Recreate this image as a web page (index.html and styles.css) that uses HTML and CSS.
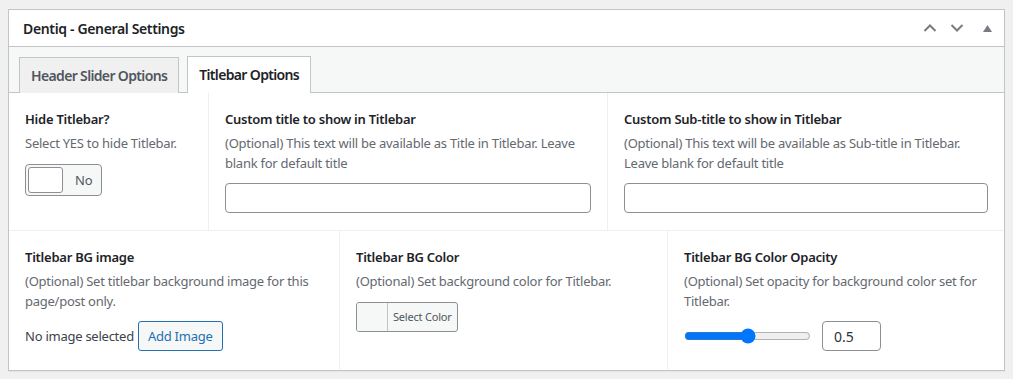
FILE: index.html
```html
<html>
  <head>
    <title>Dentiq - General Settings</title>
    <link rel="stylesheet" href="styles.css">
  </head>
  <body>
    <section class="postbox">
      <header class="postbox-header">
        <h2>Dentiq - General Settings</h2>
        <div class="handle-actions">
          <span class="handle-btn">
            <svg width="14" height="10" viewBox="0 0 14 10"><path d="M1.5 8 L7 2.5 L12.5 8" fill="none" stroke="#787c82" stroke-width="2"/></svg>
          </span>
          <span class="handle-btn">
            <svg width="14" height="10" viewBox="0 0 14 10"><path d="M1.5 2 L7 7.5 L12.5 2" fill="none" stroke="#787c82" stroke-width="2"/></svg>
          </span>
          <span class="handle-btn toggle-indicator">
            <svg width="9" height="7" viewBox="0 0 9 7"><path d="M0 7 L4.5 0 L9 7 Z" fill="#787c82"/></svg>
          </span>
        </div>
      </header>

      <nav class="tabs">
        <span class="tab">Header Slider Options</span>
        <span class="tab tab-active">Titlebar Options</span>
      </nav>

      <div class="fields-row row-top">
        <div class="field">
          <label class="field-label">Hide Titlebar?</label>
          <p class="field-desc">Select YES to hide Titlebar.</p>
          <div class="switch">
            <span class="switch-knob"></span>
            <span class="switch-text">No</span>
          </div>
        </div>
        <div class="field">
          <label class="field-label">Custom title to show in Titlebar</label>
          <p class="field-desc">(Optional) This text will be available as Title in Titlebar. Leave blank for default title</p>
          <input type="text" class="text-input">
        </div>
        <div class="field">
          <label class="field-label">Custom Sub-title to show in Titlebar</label>
          <p class="field-desc">(Optional) This text will be available as Sub-title in Titlebar. Leave blank for default title</p>
          <input type="text" class="text-input">
        </div>
      </div>

      <div class="fields-row row-bottom">
        <div class="field">
          <label class="field-label">Titlebar BG image</label>
          <p class="field-desc">(Optional) Set titlebar background image for this page/post only.</p>
          <div class="image-row">
            <span class="no-image">No image selected</span>
            <button class="button-secondary">Add Image</button>
          </div>
        </div>
        <div class="field">
          <label class="field-label">Titlebar BG Color</label>
          <p class="field-desc">(Optional) Set background color for Titlebar.</p>
          <button class="color-button">
            <span class="color-swatch"></span>
            <span class="color-text">Select Color</span>
          </button>
        </div>
        <div class="field">
          <label class="field-label">Titlebar BG Color Opacity</label>
          <p class="field-desc">(Optional) Set opacity for background color set for Titlebar.</p>
          <div class="range-row">
            <input type="range" class="range-input" min="0" max="1" step="0.01" value="0.5">
            <input type="text" class="number-input" value="0.5">
          </div>
        </div>
      </div>
    </section>
  </body>
</html>
```

FILE: styles.css
```css
body {
  margin: 0;
  padding: 9px 8px 8px 8px;
  background-color: #f0f0f1;
  font-family: "Noto Sans", "Open Sans", sans-serif;
  font-size: 13px;
  letter-spacing: -0.25px;
  color: #3c434a;
}

.postbox {
  background: #fff;
  border: 1px solid #c3c4c7;
  box-shadow: 0 1px 1px rgba(0, 0, 0, 0.04);
}

.postbox-header {
  display: flex;
  align-items: center;
  height: 36px;
  border-bottom: 1px solid #c3c4c7;
  padding-left: 14px;

  h2 {
    margin: 0;
    flex: auto;
    font-size: 14px;
    font-weight: 600;
    letter-spacing: -0.35px;
    color: #1d2327;
  }

  .handle-actions {
    display: flex;
    align-items: center;
    margin-right: 0;
  }

  .handle-btn {
    display: flex;
    align-items: center;
    justify-content: center;
    width: 27px;
    height: 36px;
  }

  .toggle-indicator {
    width: 34px;
  }
}

.tabs {
  display: flex;
  gap: 8px;
  align-items: flex-end;
  height: 45px;
  padding-left: 10px;
  background: #f6f7f7;
  border-bottom: 1px solid #c3c4c7;

  .tab {
    height: 35px;
    line-height: 35px;
    padding: 0 11px;
    margin-bottom: -1px;
    border: 1px solid #c3c4c7;
    border-bottom: none;
    background: #f0f0f1;
    font-size: 14px;
    font-weight: 600;
    letter-spacing: -0.65px;
    color: #50575e;
  }

  .tab-active {
    height: 36px;
    background: #fff;
    color: #1d2327;
  }
}

.fields-row {
  display: grid;
}

.row-top {
  grid-template-columns: 199px 399px 1fr;
}

.row-bottom {
  grid-template-columns: 330px 328px 1fr;
  border-top: 1px solid #f0f0f1;
}

.field {
  padding: 16px 16px 17px 16px;
  border-left: 1px solid #f0f0f1;

  &:first-child {
    border-left: none;
  }
}

.row-bottom .field {
  padding-bottom: 19px;
}

.field-label {
  display: block;
  font-weight: 600;
  color: #1d2327;
  line-height: 20px;
  margin-bottom: 5px;
}

.field-desc {
  margin: 0 0 10px 0;
  line-height: 19.5px;
  color: #646970;
}

.switch {
  display: flex;
  align-items: center;
  width: 75px;
  height: 30px;
  border: 1px solid #8c8f94;
  border-radius: 4px;
  background: #f6f7f7;

  .switch-knob {
    width: 33px;
    height: 24px;
    margin-left: 2px;
    background: #fff;
    border: 1px solid #8c8f94;
    border-radius: 3px;
  }

  .switch-text {
    margin-left: 12px;
    color: #50575e;
  }
}

.text-input {
  display: block;
  width: 100%;
  height: 30px;
  border: 1px solid #8c8f94;
  border-radius: 4px;
  background: #fff;
}

.image-row {
  display: flex;
  align-items: center;
  gap: 4px;

  .no-image {
    color: #3c434a;
  }
}

.button-secondary {
  height: 30px;
  padding: 0 9px;
  border: 1px solid #2271b1;
  border-radius: 3px;
  background: #f6f7f7;
  color: #2271b1;
  font-family: inherit;
  font-size: 13px;
  letter-spacing: -0.25px;
}

.color-button {
  display: flex;
  align-items: stretch;
  height: 30px;
  padding: 0;
  border: 1px solid #8c8f94;
  border-radius: 3px;
  background: #f6f7f7;
  overflow: hidden;

  .color-swatch {
    width: 30px;
    border-right: 1px solid #c3c4c7;
    background: #f6f7f7;
  }

  .color-text {
    padding: 0 5px;
    line-height: 28px;
    font-family: "Noto Sans", sans-serif;
    font-size: 11px;
    letter-spacing: -0.2px;
    color: #50575e;
  }
}

.range-row {
  display: flex;
  align-items: center;
  gap: 10px;

  .range-input {
    width: 127px;
    margin: 0 1px 0 0;
  }
}

.number-input {
  width: 59px;
  height: 30px;
  padding: 0 11px;
  border: 1px solid #8c8f94;
  border-radius: 4px;
  font-family: inherit;
  font-size: 14px;
  color: #2c3338;
}
```
